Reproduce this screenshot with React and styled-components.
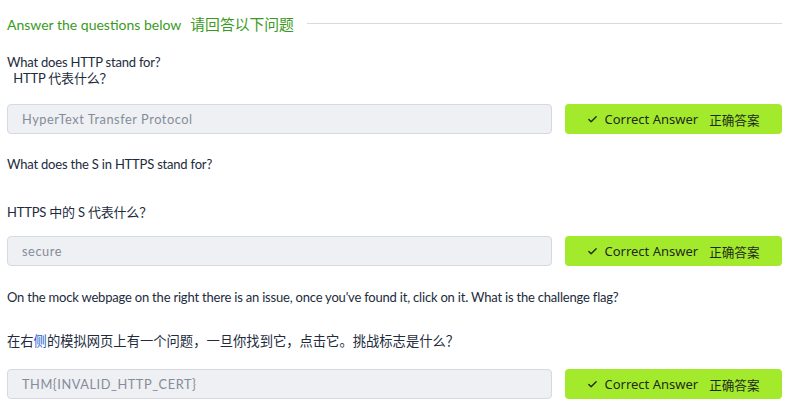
import React from "react";
import styled, { createGlobalStyle } from "styled-components";

const Global = createGlobalStyle`
  html, body { margin: 0; padding: 0; background: #ffffff; }
  body { font-family: Lato, "Noto Sans CJK SC", sans-serif; }
`;

const Page = styled.div`
  width: 800px;
  box-sizing: border-box;
  padding: 0 18px 0 7px;
  display: flex;
  flex-direction: column;
`;

const Header = styled.div`
  height: 46px;
  display: flex;
  align-items: center;
  gap: 13px;
`;

const HeaderTitle = styled.h2`
  margin: 0;
  font-family: Lato, "Noto Sans CJK SC", sans-serif;
  font-weight: 400;
  font-size: 14px;
  color: #3a9a1e;
  white-space: nowrap;
  & > span { margin-left: 9px; font-size: 14.8px; }
`;

const Rule = styled.div`
  flex: 1;
  height: 1px;
  background: #dadada;
`;

const Text = styled.p`
  margin: ${(p) => p.$mt || 0}px 0 0 0;
  font-size: ${(p) => (p.$cjk ? 13.3 : 13)}px;
  letter-spacing: ${(p) => (p.$cjk ? 0 : -0.2)}px;
  line-height: ${(p) => p.$lh || 20}px;
  color: #222b3c;
  white-space: pre;
  font-family: Lato, "Noto Sans CJK SC", sans-serif;
`;

const Blue = styled.span`
  color: #2a62c9;
`;

const Row = styled.div`
  margin-top: ${(p) => p.$mt || 0}px;
  display: grid;
  grid-template-columns: 1fr 217px;
  gap: 13px;
  height: 30px;
`;

const Field = styled.div`
  box-sizing: border-box;
  height: 30px;
  background: #eef0f4;
  border: 1px solid #d5d9e0;
  border-radius: 4px;
  display: flex;
  align-items: center;
  padding-left: 14px;
  font-family: Lato, sans-serif;
  font-size: 12.8px;
  letter-spacing: 0.55px;
  color: #858c98;
`;

const Button = styled.button`
  height: 30px;
  border: none;
  border-radius: 4px;
  background: #a4ea2c;
  display: flex;
  align-items: center;
  justify-content: center;
  gap: 6px;
  font-family: "Noto Sans", "Noto Sans CJK SC", sans-serif;
  font-size: 13px;
  color: #1f2a1a;
  padding: 0;
  & > span.cn { margin-left: 5px; font-size: 12.6px; }
`;

const Check = () => (
  <svg width="11" height="11" viewBox="0 0 24 24" fill="none" stroke="#1f2a1a" strokeWidth="3" strokeLinecap="round" strokeLinejoin="round">
    <path d="M20 6 9 17l-5-5" />
  </svg>
);

const AnswerRow = ({ value, mt }) => (
  <Row $mt={mt}>
    <Field>{value}</Field>
    <Button>
      <Check />
      <span>Correct Answer</span>
      <span className="cn">正确答案</span>
    </Button>
  </Row>
);

export default function App() {
  return (
    <>
      <Global />
      <Page>
        <Header>
          <HeaderTitle>
            Answer the questions below<span>请回答以下问题</span>
          </HeaderTitle>
          <Rule />
        </Header>
        <Text $mt={8} $lh={16}>What does HTTP stand for?</Text>
        <Text $lh={16}>{"  HTTP 代表什么？"}</Text>
        <AnswerRow value="HyperText Transfer Protocol" mt={18} />
        <Text $mt={20}>What does the S in HTTPS stand for?</Text>
        <Text $mt={28}>HTTPS 中的 S 代表什么？</Text>
        <AnswerRow value="secure" mt={14} />
        <Text $mt={21}>
          On the mock webpage on the right there is an issue, once you've found it, click on it. What is the challenge flag?
        </Text>
        <Text $mt={24} $cjk>
          在右<Blue>侧</Blue>的模拟网页上有一个问题，一旦你找到它，点击它。挑战标志是什么？
        </Text>
        <AnswerRow value="THM{INVALID_HTTP_CERT}" mt={18} />
      </Page>
    </>
  );
}
